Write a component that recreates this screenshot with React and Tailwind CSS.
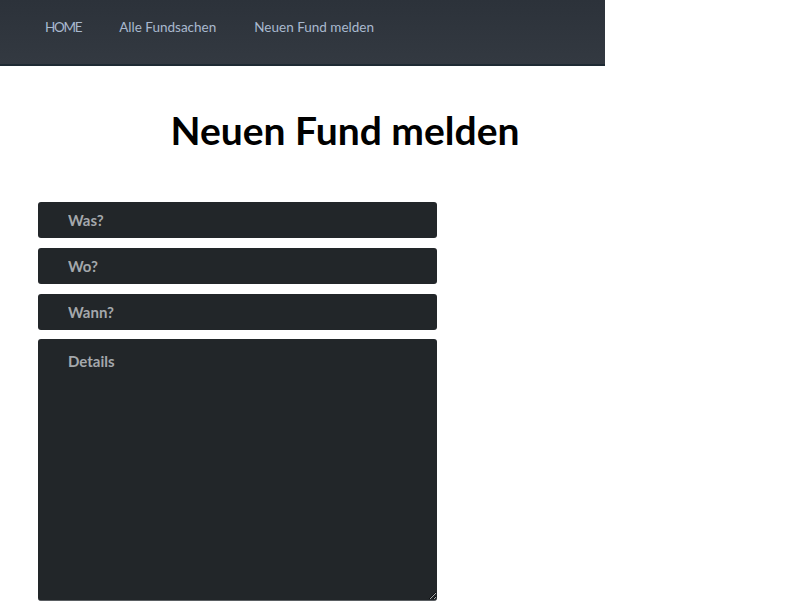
export default function App() {
    return (
        <div className="min-h-screen bg-white" style={{ fontFamily: 'Lato, "Noto Sans", sans-serif' }}>
            <nav className="w-[605px] h-[66px] bg-gradient-to-b from-[#2c323a] to-[#333941] border-b-2 border-[#1e2a33] flex items-center pl-[45px] gap-[38px] pb-[10px]">
                <a className="text-[13.5px] tracking-[-1.3px] text-[#a9b9cf]">HOME</a>
                <a className="text-[13.5px] text-[#a9b9cf]">Alle Fundsachen</a>
                <a className="text-[13.5px] text-[#a9b9cf]">Neuen Fund melden</a>
            </nav>

            <div className="w-[690px]">
                <h1 className="text-center text-[39px] font-bold text-black mt-[42px] leading-[44px]">
                    Neuen Fund melden
                </h1>

                <form className="mt-[50px] ml-[38px] w-[399px] flex flex-col gap-[10px]">
                    <input
                        placeholder="Was?"
                        className="h-[36px] rounded-[3px] bg-[#222629] px-[30px] pb-[1px] text-[15px] font-bold text-[#a4a8ac] placeholder:text-[#a4a8ac] outline-none"
                    />
                    <input
                        placeholder="Wo?"
                        className="h-[36px] rounded-[3px] bg-[#222629] px-[30px] pb-[1px] text-[15px] font-bold text-[#a4a8ac] placeholder:text-[#a4a8ac] outline-none"
                    />
                    <input
                        placeholder="Wann?"
                        className="h-[36px] rounded-[3px] bg-[#222629] px-[30px] pb-[1px] text-[15px] font-bold text-[#a4a8ac] placeholder:text-[#a4a8ac] outline-none"
                    />
                    <textarea
                        placeholder="Details"
                        className="-mt-[1px] h-[262px] rounded-[3px] bg-[#222629] px-[30px] pt-[11px] text-[15px] font-bold text-[#a4a8ac] placeholder:text-[#a4a8ac] outline-none border-b border-[#5a5e62]"
                    />
                </form>
            </div>
        </div>
    );
}
